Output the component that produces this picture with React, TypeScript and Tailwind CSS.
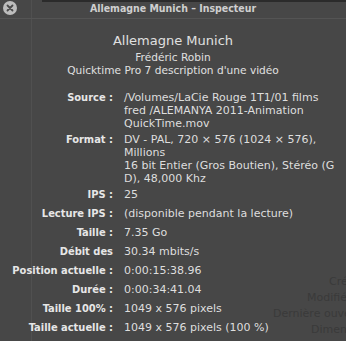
import React from "react";

const rows: { label: string; lines: string[] }[] = [
  { label: "Source :", lines: ["/Volumes/LaCie Rouge 1T1/01 films", "fred /ALEMANYA 2011-Animation", "QuickTime.mov"] },
  { label: "Format :", lines: ["DV - PAL, 720 × 576 (1024 × 576),", "Millions", "16 bit Entier (Gros Boutien), Stéréo (G", "D), 48,000 Khz"] },
  { label: "IPS :", lines: ["25"] },
  { label: "Lecture IPS :", lines: ["(disponible pendant la lecture)"] },
  { label: "Taille :", lines: ["7.35 Go"] },
  { label: "Débit des", lines: ["30.34 mbits/s"] },
  { label: "Position actuelle :", lines: ["0:00:15:38.96"] },
  { label: "Durée :", lines: ["0:00:34:41.04"] },
  { label: "Taille 100% :", lines: ["1049 x 576 pixels"] },
  { label: "Taille actuelle :", lines: ["1049 x 576 pixels (100 %)"] },
];

const cond = { fontFamily: '"DejaVu Sans Condensed", "DejaVu Sans", sans-serif' };

export default function App() {
  return (
    <div
      className="relative w-[346px] h-[341px] overflow-hidden bg-[#474747]"
      style={{ fontFamily: '"Lucida Grande", "DejaVu Sans", sans-serif' }}
    >
      {/* top dark strip of window behind */}
      <div className="absolute left-[42px] right-0 top-0 h-[2px] bg-[#2b2b2b]" />
      {/* faint vertical edge */}
      <div className="absolute left-[31px] top-0 bottom-0 w-px bg-[#505050]" />

      {/* background window text, clipped by the window edge */}
      <div className="absolute left-[270px] top-[274px] w-[76px] overflow-hidden">
        <div className="flex w-[140px] flex-col text-[11px] leading-[16px] text-[#3a3a3a]">
          <span className="pl-[59px]">Créé</span>
          <span className="pl-[37px]">Modifié</span>
          <span className="pl-[3px]">Dernière ouverture</span>
          <span className="pl-[41px]">Dimensions</span>
        </div>
      </div>

      <div className="relative z-10">
        {/* title bar */}
        <div className="relative flex h-[19px] items-center justify-center border-b border-[#545454]">
          <div className="absolute left-[3px] top-[1px] flex h-[14px] w-[14px] items-center justify-center rounded-full bg-[#bdbdbd]">
            <svg width="8" height="8" viewBox="0 0 8 8">
              <path d="M1.5 1.5 L6.5 6.5 M6.5 1.5 L1.5 6.5" stroke="#4a4a4a" strokeWidth="1.8" strokeLinecap="round" />
            </svg>
          </div>
          <span className="text-[10.5px] font-bold text-[#cfcfcf]" style={cond}>
            Allemagne Munich – Inspecteur
          </span>
        </div>

        {/* header */}
        <div className="flex flex-col items-center pt-[13px] text-[#e0e0e0]">
          <div className="text-[13px] leading-[17px]">Allemagne Munich</div>
          <div className="mt-[2px] text-[10.6px] leading-[13px]">Frédéric Robin</div>
          <div className="text-[10.6px] leading-[13px]">Quicktime Pro 7 description d'une vidéo</div>
        </div>

        {/* rows */}
        <div className="mt-[14px] flex flex-col text-[11px] leading-[13px]">
          {rows.map((r) => (
            <div key={r.label} className={`flex ${r.lines.length > 1 ? "pb-[3px]" : "pb-[6px]"}`}>
              <div className="w-[113px] shrink-0 text-right font-bold text-[#e6e6e6]" style={cond}>
                {r.label}
              </div>
              <div className="flex flex-col pl-[11px] text-[#dedede]">
                {r.lines.map((l, i) => (
                  <span key={i} className="whitespace-nowrap">
                    {l}
                  </span>
                ))}
              </div>
            </div>
          ))}
        </div>
      </div>
    </div>
  );
}
